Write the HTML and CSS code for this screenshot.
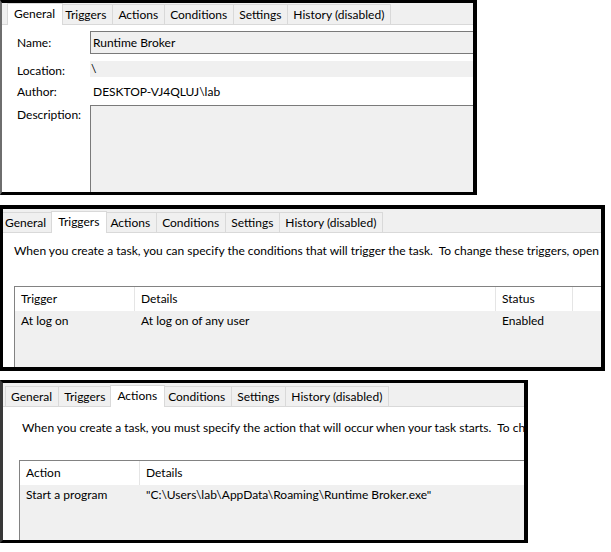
FILE: index.html
```html
<!DOCTYPE html>
<html lang="en">
<head>
<meta charset="utf-8">
<title>Task properties</title>
<link rel="stylesheet" href="styles.css">
</head>
<body>
<div class="shots">

  <section class="win win-general">
    <div class="tabs">
      <span class="tab sel">General</span><span class="tab">Triggers</span><span class="tab">Actions</span><span class="tab">Conditions</span><span class="tab">Settings</span><span class="tab">History (disabled)</span>
    </div>
    <div class="page gen-page">
      <div class="row r-name"><span class="lbl">Name:</span><div class="field box">Runtime Broker</div></div>
      <div class="row r-loc"><span class="lbl">Location:</span><div class="field flat">\</div></div>
      <div class="row r-auth"><span class="lbl">Author:</span><div class="field plain">DESKTOP-VJ4QLUJ\lab</div></div>
      <div class="row r-desc"><span class="lbl">Description:</span><div class="field area"></div></div>
    </div>
  </section>

  <section class="win win-triggers">
    <div class="tabs">
      <span class="tab">General</span><span class="tab sel">Triggers</span><span class="tab">Actions</span><span class="tab">Conditions</span><span class="tab">Settings</span><span class="tab">History (disabled)</span>
    </div>
    <div class="page list-page">
      <p class="intro">When you create a task, you can specify the conditions that will trigger the task.  To change these triggers, open the task property pages using the Properties command.</p>
      <div class="lv">
        <div class="lv-head">
          <span class="col c-trig">Trigger</span><span class="col c-det">Details</span><span class="col c-stat">Status</span><span class="col c-rest"></span>
        </div>
        <div class="lv-body">
          <div class="lv-row">
            <span class="cell c-trig">At log on</span><span class="cell c-det">At log on of any user</span><span class="cell c-stat">Enabled</span>
          </div>
        </div>
      </div>
    </div>
  </section>

  <section class="win win-actions">
    <div class="tabs">
      <span class="tab">General</span><span class="tab">Triggers</span><span class="tab sel">Actions</span><span class="tab">Conditions</span><span class="tab">Settings</span><span class="tab">History (disabled)</span>
    </div>
    <div class="page list-page">
      <p class="intro">When you create a task, you must specify the action that will occur when your task starts.  To change these actions, open the task property pages using the Properties command.</p>
      <div class="lv">
        <div class="lv-head">
          <span class="col c-act">Action</span><span class="col c-path">Details</span>
        </div>
        <div class="lv-body">
          <div class="lv-row">
            <span class="cell c-act">Start a program</span><span class="cell c-path">"C:\Users\lab\AppData\Roaming\Runtime Broker.exe"</span>
          </div>
        </div>
      </div>
    </div>
  </section>

</div>
</body>
</html>
```

FILE: styles.css
```css
html, body {
  margin: 0;
  padding: 0;
  background: #fff;
}

body {
  font-family: Lato, "Noto Sans", sans-serif;
  font-size: 12px;
  color: #000;
}

.shots {
  width: 611px;
  height: 552px;
  display: flex;
  flex-direction: column;
  align-items: flex-start;
}

/* ---------- framed screenshots ---------- */
.win {
  box-sizing: border-box;
  border: 0 solid #000;
  background: #fff;
  overflow: hidden;
  display: flex;
  flex-direction: column;
  flex: none;
}

.win-general {
  width: 477px;
  height: 195px;
  border-width: 3px 4px 3px 2px;
  border-left-color: #6e6e6e;
  --strip-h: 22px;
}

.win-triggers {
  width: 605px;
  height: 166px;
  margin-top: 10px;
  border-width: 4px 4px 4px 3px;
  --strip-h: 24px;
}

.win-actions {
  width: 528px;
  height: 163px;
  margin-top: 9px;
  border-width: 3px 4px 3px 3px;
  border-left-color: #3a3a3a;
  --strip-h: 24px;
}

/* ---------- tab strip ---------- */
.tabs {
  box-sizing: border-box;
  height: var(--strip-h);
  flex: none;
  display: flex;
  align-items: flex-end;
  background: #f0f0f0;
  border-bottom: 1px solid #d9d9d9;
  white-space: nowrap;
}

.tab {
  box-sizing: border-box;
  height: 20px;
  padding: 0 6px 0 5px;
  margin-left: -1px;
  border: 1px solid #d9d9d9;
  border-bottom: 0;
  background: #f0f0f0;
  line-height: 19px;
  flex: none;
}

.tab.sel {
  height: 22px;
  padding: 0 7px 0 6px;
  margin: 0 -2px -1px;
  background: #fff;
  position: relative;
  z-index: 1;
}

.win-general .tab.sel { margin-left: 5px; }
.win-general .tab:nth-child(2) { margin-left: -2px; }
.win-triggers .tab:first-child { margin-left: -4px; }
.win-actions .tab:first-child { margin-left: 2px; }

/* ---------- pages ---------- */
.page {
  flex: 1;
  min-height: 0;
  background: #fff;
  display: flex;
  flex-direction: column;
  overflow: hidden;
}

/* General page */
.gen-page {
  padding: 6px 0 0 15px;
}

.row {
  display: flex;
  align-items: flex-start;
  flex: none;
}

.lbl {
  width: 73px;
  flex: none;
}

.field {
  flex: 1;
  min-width: 0;
  white-space: nowrap;
}

.r-name { height: 23px; align-items: center; }
.r-name .lbl { line-height: 23px; }
.box {
  box-sizing: border-box;
  height: 23px;
  border: 1px solid #7a7a7a;
  border-right: 0;
  background: #f0f0f0;
  padding-left: 2px;
  line-height: 21px;
}

.r-loc { margin-top: 7px; }
.r-loc .lbl { line-height: 16px; margin-top: 2px; }
.flat {
  height: 16px;
  line-height: 16px;
  background: #f0f0f0;
  padding-left: 1px;
}

.r-auth { margin-top: 3px; }
.r-auth .lbl,
.plain { line-height: 20px; }
.plain { padding-left: 3px; }

.r-desc {
  margin-top: 3px;
  flex: 1;
  align-items: stretch;
}
.r-desc .lbl { line-height: 16px; margin-top: 2px; }
.area {
  border-top: 1px solid #7a7a7a;
  border-left: 1px solid #7a7a7a;
  background: #f0f0f0;
}

/* list pages */
.list-page {
  padding-left: 11px;
}
.win-triggers .list-page { padding-top: 10px; }
.win-actions .list-page { padding-top: 13px; padding-left: 19px; }

.intro {
  margin: 0;
  line-height: 16px;
  white-space: pre;
  flex: none;
}

.lv {
  flex: 1;
  margin-right: -40px;
  display: flex;
  flex-direction: column;
  border-top: 1px solid #828282;
  border-left: 1px solid #828282;
}
.win-triggers .lv { margin-top: 27px; }
.win-actions .lv { margin-top: 24px; margin-left: -3px; }

.lv-head {
  display: flex;
  height: 24px;
  flex: none;
  background: #fff;
}

.col,
.cell {
  box-sizing: border-box;
  padding-left: 6px;
  flex: none;
  white-space: nowrap;
}

.col {
  line-height: 24px;
  border-right: 1px solid #e5e5e5;
}

.lv-body {
  flex: 1;
  background: #f0f0f0;
}

.lv-row {
  display: flex;
  height: 20px;
  line-height: 20px;
}

.c-trig { width: 120px; }
.c-det { width: 361px; }
.c-stat { width: 77px; }
.c-rest { flex: 1; border-right: 0; }

.c-act { width: 120px; }
.c-path { width: 420px; }
.col.c-path { border-right: 0; }
```
